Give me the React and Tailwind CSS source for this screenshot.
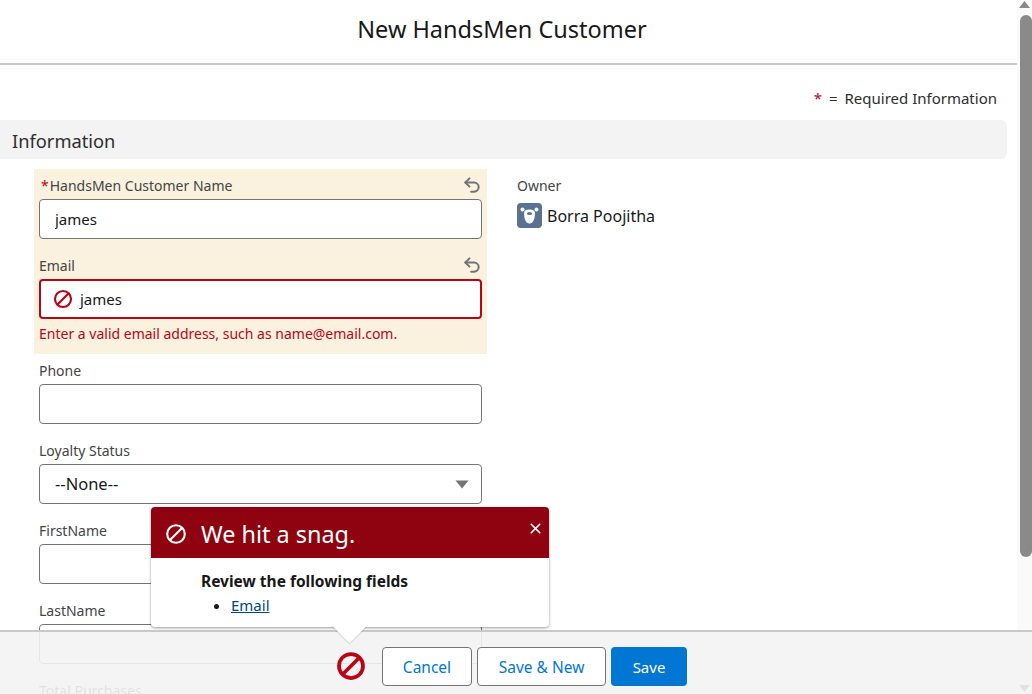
import { Undo2, X } from 'lucide-react';

const BanIcon = ({ size = 18, stroke = 2.4, className = '' }) => (
  <svg width={size} height={size} viewBox="0 0 24 24" fill="none" stroke="currentColor" strokeWidth={stroke} className={`shrink-0 ${className}`}>
    <circle cx="12" cy="12" r="9.6" />
    <line x1="18.8" y1="5.2" x2="5.2" y2="18.8" />
  </svg>
);

const BearIcon = () => (
  <svg width="25" height="25" viewBox="0 0 25 25" className="shrink-0">
    <rect width="25" height="25" rx="4" fill="#5a7194" />
    <circle cx="5.5" cy="6.5" r="2" fill="#fff" />
    <circle cx="19.5" cy="6.5" r="2" fill="#fff" />
    <path d="M7 10c0-2.5 2.5-3.5 5.500-3.500S18 7.500 18 10c0 4-1 10.500-5.500 10.500S7 14 7 10z" fill="#fff" />
    <ellipse cx="12.500" cy="10.500" rx="2.600" ry="1.600" fill="#5a7194" />
  </svg>
);

const FieldLabel = ({ label, required, undo }) => (
  <div className="flex h-6 items-start justify-between">
    <span className="pt-px text-[14px] leading-[20px] text-[#444444]">
      {required && <span className="mr-px ml-[2px] text-[#ba0517]">*</span>}
      {label}
    </span>
    {undo && <Undo2 size={20} strokeWidth={2.4} className="text-[#747474]" />}
  </div>
);

const Field = ({ label, value, required, undo, className = '' }) => (
  <div className={className}>
    <FieldLabel label={label} required={required} undo={undo} />
    <input
      readOnly
      value={value || ''}
      className="h-10 w-full rounded border border-[#747474] bg-white px-[15px] text-[15px] text-[#181818] outline-none"
    />
  </div>
);

const FooterButton = ({ children, className = '' }) => (
  <button className={`h-[39px] rounded border border-[#747474] bg-white pt-[2px] text-[15.5px] text-[#0176d3] ${className}`}>
    {children}
  </button>
);

const App = () => {
  return (
    <div className="relative flex h-[694px] w-[1032px] overflow-hidden bg-white font-['Noto_Sans',sans-serif] text-[#181818]">
      <main className="h-full w-[1017px] shrink-0">
        <header className="flex h-[65px] items-center justify-center border-b-2 border-[#c9c9c9] pr-[13px] pb-[3px]">
          <h1 className="text-[23.5px] font-normal">New HandsMen Customer</h1>
        </header>

        <div className="flex h-[55px] items-center justify-end pt-[12px] pr-5 text-[15px] text-[#2e2e2e]">
          <span className="mr-[7px] text-[#ba0517]">*</span>
          <span className="mr-[7px]">=</span>
          <span>Required Information</span>
        </div>

        <div className="mr-[10px] flex h-[39px] items-center rounded-r-md bg-[#f3f3f3] pt-[2px] pl-3 text-[18.3px] text-[#2e2e2e]">
          Information
        </div>

        <div className="mt-[10px] flex">
          <div className="ml-[34px] w-[453px] shrink-0">
            <div className="h-[185px] bg-[#faf1df] px-[5px] pt-[6px]">
              <Field label="HandsMen Customer Name" value="james" required undo />
              <div className="mt-4">
                <FieldLabel label="Email" undo />
                <div className="flex h-10 items-center gap-[7px] rounded border-2 border-[#ba0517] bg-white px-[12px] text-[15px]">
                  <BanIcon size={20} stroke={2.6} className="text-[#ba0517]" />
                  james
                </div>
                <p className="mt-[5px] text-[14px] leading-5 text-[#ba0517]">
                  Enter a valid email address, such as name@email.com.
                </p>
              </div>
            </div>

            <div className="px-[5px] pt-[6px]">
              <Field label="Phone" />
              <div className="mt-4">
                <FieldLabel label="Loyalty Status" />
                <div className="flex h-10 items-center justify-between rounded border border-[#747474] bg-white pr-3 pl-[15px] text-[16.5px]">
                  --None--
                  <svg width="14" height="9" viewBox="0 0 14 9">
                    <path d="M0.500 0.500h13L7 8.500z" fill="#747474" />
                  </svg>
                </div>
              </div>
              <Field label="FirstName" className="mt-4" />
              <Field label="LastName" className="mt-4" />
              <div className="mt-4">
                <FieldLabel label="Total Purchases" />
              </div>
            </div>
          </div>

          <div className="ml-[30px] pt-[6px]">
            <FieldLabel label="Owner" />
            <div className="mt-[4px] flex items-center gap-[5px] text-[16px]">
              <BearIcon />
              Borra Poojitha
            </div>
          </div>
        </div>
      </main>

      {/* scrollbar */}
      <div className="flex h-[631px] w-[15px] flex-col items-center bg-[#fafafa]">
        <svg width="11" height="7" viewBox="0 0 11 7" className="mt-[1px]">
          <path d="M5.500 0L11 7H0z" fill="#8a8a8a" />
        </svg>
        <div className="mt-[7px] ml-[3px] h-[542px] w-[12px] rounded-b-md rounded-t-md bg-[#8a8a8a]" />
      </div>

      {/* modal footer, lies over the form */}
      <footer className="absolute inset-x-0 bottom-0 flex h-[64px] items-start border-t-2 border-[#c9c9c9] bg-[#f3f3f3]/90 pt-[15px] pl-[336px]">
        <BanIcon size={30} stroke={3} className="mt-[4px] text-[#ba0517]" />
        <FooterButton className="ml-[16px] w-[90px]">Cancel</FooterButton>
        <FooterButton className="ml-[5px] w-[129px]">Save &amp; New</FooterButton>
        <button className="ml-[5px] h-[39px] w-[76px] rounded bg-[#0176d3] pt-px text-[15px] text-white">Save</button>
      </footer>
      <svg width="11" height="7" viewBox="0 0 11 7" className="absolute top-[685px] right-[2px]">
        <path d="M5.500 7L11 0H0z" fill="#e2e2e2" />
      </svg>

      {/* error popover */}
      <div className="absolute top-[507px] left-[151px] h-[120px] w-[398px] rounded bg-white shadow-[0_1px_3px_rgba(0,0,0,0.4)]">
        <div className="absolute -bottom-[11px] left-[186px] size-[25px] rotate-45 bg-white shadow-[1px_1px_1px_rgba(0,0,0,0.12)]" />
        <div className="relative flex h-[51px] items-center rounded-t bg-[#8e030f] pt-[2px] pl-[14px] text-white">
          <BanIcon size={22} stroke={2.3} />
          <span className="ml-[14px] pt-[2px] text-[23.4px]">We hit a snag.</span>
          <X size={17} strokeWidth={2.300} className="absolute top-[13px] right-[5px]" />
        </div>
        <div className="relative pt-[12px] pl-[50px] text-[15px]">
          <p className="text-[15.5px] leading-[22px] font-bold">Review the following fields</p>
          <ul className="mt-[1px] list-disc pl-[30px] leading-6">
            <li>
              <a href="#email" className="text-[#014486] underline">Email</a>
            </li>
          </ul>
        </div>
      </div>
    </div>
  );
};

export default App;
